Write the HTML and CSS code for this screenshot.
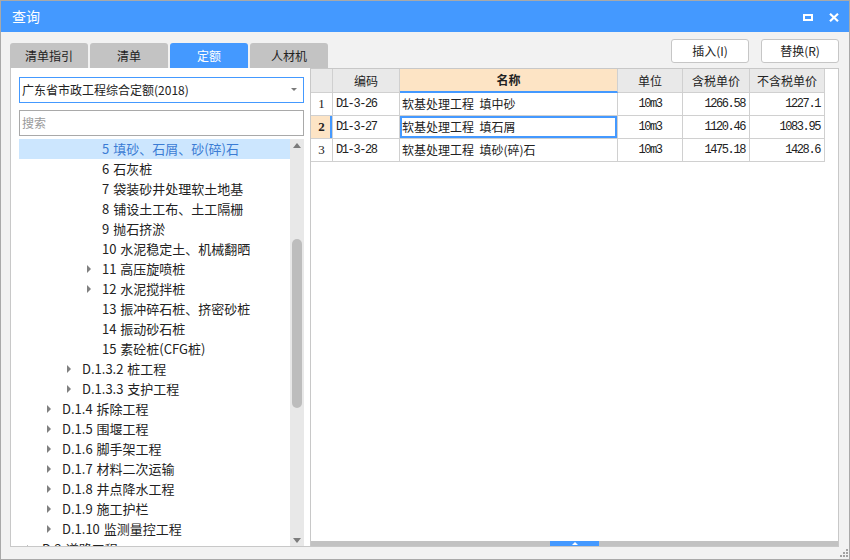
FILE: index.html
```html
<!DOCTYPE html>
<html lang="zh-CN">
<head>
<meta charset="utf-8">
<title>查询</title>
<link rel="stylesheet" href="styles.css">
</head>
<body>
<div class="window">
  <div class="titlebar">
    <span class="title">查询</span>
    <div class="win-controls">
      <span class="max-icon"></span>
      <svg class="close-icon" width="10" height="9" viewBox="0 0 10 9"><path d="M1 0.8 L9 8.2 M9 0.8 L1 8.2" stroke="#fff" stroke-width="2.2" fill="none"/></svg>
    </div>
  </div>
  <div class="toolbar">
    <div class="tabs">
      <div class="tab">清单指引</div>
      <div class="tab">清单</div>
      <div class="tab active">定额</div>
      <div class="tab">人材机</div>
    </div>
    <div class="actions">
      <button class="btn">插入(I)</button>
      <button class="btn">替换(R)</button>
    </div>
  </div>
  <div class="main">
    <div class="left">
      <div class="select"><span class="select-text">广东省市政工程综合定额(2018)</span><span class="caret"></span></div>
      <div class="search">搜索</div>
      <div class="tree-wrap">
        <div class="tree">
          <div class="row l4 selected"><span class="arr"></span><span class="txt">5 填砂、石屑、砂(碎)石</span></div>
          <div class="row l4"><span class="arr none"></span><span class="txt">6 石灰桩</span></div>
          <div class="row l4"><span class="arr none"></span><span class="txt">7 袋装砂井处理软土地基</span></div>
          <div class="row l4"><span class="arr none"></span><span class="txt">8 铺设土工布、土工隔栅</span></div>
          <div class="row l4"><span class="arr none"></span><span class="txt">9 抛石挤淤</span></div>
          <div class="row l4"><span class="arr none"></span><span class="txt">10 水泥稳定土、机械翻晒</span></div>
          <div class="row l4"><span class="arr"></span><span class="txt">11 高压旋喷桩</span></div>
          <div class="row l4"><span class="arr"></span><span class="txt">12 水泥搅拌桩</span></div>
          <div class="row l4"><span class="arr none"></span><span class="txt">13 振冲碎石桩、挤密砂桩</span></div>
          <div class="row l4"><span class="arr none"></span><span class="txt">14 振动砂石桩</span></div>
          <div class="row l4"><span class="arr none"></span><span class="txt">15 素砼桩(CFG桩)</span></div>
          <div class="row l3"><span class="arr"></span><span class="txt">D.1.3.2 桩工程</span></div>
          <div class="row l3"><span class="arr"></span><span class="txt">D.1.3.3 支护工程</span></div>
          <div class="row l2"><span class="arr"></span><span class="txt">D.1.4 拆除工程</span></div>
          <div class="row l2"><span class="arr"></span><span class="txt">D.1.5 围堰工程</span></div>
          <div class="row l2"><span class="arr"></span><span class="txt">D.1.6 脚手架工程</span></div>
          <div class="row l2"><span class="arr"></span><span class="txt">D.1.7 材料二次运输</span></div>
          <div class="row l2"><span class="arr"></span><span class="txt">D.1.8 井点降水工程</span></div>
          <div class="row l2"><span class="arr"></span><span class="txt">D.1.9 施工护栏</span></div>
          <div class="row l2"><span class="arr"></span><span class="txt">D.1.10 监测量控工程</span></div>
          <div class="row l1"><span class="arr"></span><span class="txt">D.2 道路工程</span></div>
        </div>
        <div class="vscroll">
          <div class="sb-btn"><span class="tri-up"></span></div>
          <div class="thumb"></div>
          <div class="sb-fill"></div>
          <div class="sb-btn"><span class="tri-down"></span></div>
        </div>
      </div>
    </div>
    <div class="right">
      <div class="grid">
        <div class="gr head">
          <div class="c cn"></div>
          <div class="c">编码</div>
          <div class="c hl">名称</div>
          <div class="c">单位</div>
          <div class="c">含税单价</div>
          <div class="c">不含税单价</div>
        </div>
        <div class="gr">
          <div class="c cn">1</div>
          <div class="c code">D1-3-26</div>
          <div class="c name">软基处理工程  填中砂</div>
          <div class="c unit">10m3</div>
          <div class="c num">1266.58</div>
          <div class="c num">1227.1</div>
        </div>
        <div class="gr cur">
          <div class="c cn">2</div>
          <div class="c code">D1-3-27</div>
          <div class="c name focus">软基处理工程  填石屑</div>
          <div class="c unit">10m3</div>
          <div class="c num">1120.46</div>
          <div class="c num">1083.95</div>
        </div>
        <div class="gr">
          <div class="c cn">3</div>
          <div class="c code">D1-3-28</div>
          <div class="c name">软基处理工程  填砂(碎)石</div>
          <div class="c unit">10m3</div>
          <div class="c num">1475.18</div>
          <div class="c num">1428.6</div>
        </div>
      </div>
      <div class="spacer"></div>
      <div class="hscroll"><span class="handle"><span class="tri-small"></span></span></div>
    </div>
  </div>
  <div class="statusbar">
    <svg class="grip" width="10" height="9" viewBox="0 0 10 9">
      <rect x="7" y="0" width="2" height="2" fill="#a3a3a3"/>
      <rect x="4" y="3" width="2" height="2" fill="#a3a3a3"/>
      <rect x="7" y="3" width="2" height="2" fill="#a3a3a3"/>
      <rect x="1" y="6" width="2" height="2" fill="#a3a3a3"/>
      <rect x="4" y="6" width="2" height="2" fill="#a3a3a3"/>
      <rect x="7" y="6" width="2" height="2" fill="#a3a3a3"/>
    </svg>
  </div>
</div>
</body>
</html>
```
FILE: styles.css
```css
* { box-sizing: border-box; margin: 0; padding: 0; }
body { margin: 0; background: #ffffff; font-family: "Noto Sans CJK SC", "Noto Sans", sans-serif; color: #222; }

.window {
  width: 850px; height: 560px;
  border: 1px solid #a9a9a9;
  background: #f2f2f2;
  display: flex; flex-direction: column;
  overflow: hidden;
}

.titlebar {
  height: 31px; flex: none;
  background: #4499ff;
  display: flex; align-items: center;
  padding: 0 10px 0 11px;
  color: #fff;
}
.title { flex: 1; font-size: 14px; line-height: 31px; }
.win-controls { display: flex; align-items: center; gap: 16px; padding-top: 1px; }
.max-icon { width: 10px; height: 7px; border: 2px solid #fff; display: block; }
.close-icon { display: block; }

.toolbar {
  height: 36px; flex: none;
  display: flex; justify-content: space-between;
  padding: 0 10px 0 9px;
}
.tabs { display: flex; gap: 2px; align-self: flex-end; }
.tab {
  width: 78px; height: 25px;
  background: #c3c3c3;
  border-radius: 3px 3px 0 0;
  font-size: 12px; line-height: 25px; text-align: center;
  color: #222;
}
.tab.active { background: #4499ff; color: #fff; }

.actions { display: flex; gap: 12px; padding-top: 7px; }
.btn {
  width: 78px; height: 24px;
  background: #fff;
  border: 1px solid #c6c6c6; border-radius: 3px;
  font-family: "Noto Sans CJK SC", "Noto Sans", sans-serif;
  font-size: 12px; color: #222; line-height: 22px;
}

.main {
  height: 479px; flex: none;
  display: flex;
  padding: 0 10px 0 9px;
}

.left {
  width: 300px; flex: none;
  background: #fff;
  border-left: 1px solid #c8c8c8;
  border-bottom: 1px solid #c8c8c8;
  padding: 9px 6px 0 8px;
  display: flex; flex-direction: column;
}
.select {
  height: 26px; flex: none;
  border: 1px solid #4499ff;
  display: flex; align-items: center; justify-content: space-between;
  padding: 0 6px 0 2px;
}
.select-text { font-size: 12px; line-height: 24px; color: #222; }
.caret {
  width: 0; height: 0;
  border-left: 3px solid transparent; border-right: 3px solid transparent;
  border-top: 3px solid #7a7a7a;
  margin-top: -2px;
}
.search {
  height: 26px; flex: none; margin-top: 7px;
  border: 1px solid #a9a9a9;
  font-size: 12px; line-height: 24px; color: #9a9a9a;
  padding-left: 2px;
}

.tree-wrap { flex: 1; min-height: 0; margin-top: 3px; display: flex; overflow: hidden; }
.tree { flex: 1; min-width: 0; overflow: hidden; }
.row {
  height: 20px; display: flex; align-items: center;
  font-size: 13px; line-height: 20px; color: #222; white-space: nowrap;
}
.row.selected { background: #cce6fe; color: #3b7cd4; }
.row.l1 { padding-left: 8px; }
.row.l2 { padding-left: 28px; }
.row.l3 { padding-left: 48px; }
.row.l4 { padding-left: 68px; }
.arr {
  width: 15px; height: 8px; flex: none; position: relative;
}
.arr::before {
  content: ""; position: absolute; left: 0; top: 0;
  border-left: 4px solid #808080;
  border-top: 4px solid transparent; border-bottom: 4px solid transparent;
}
.row.selected .arr::before, .arr.none::before { display: none; }
.txt { display: block; word-spacing: 1px; }

.vscroll {
  width: 14px; flex: none;
  background: #e8e8e8;
  display: flex; flex-direction: column; align-items: center;
}
.sb-btn { height: 12px; width: 14px; flex: none; display: flex; align-items: center; justify-content: center; }
.tri-up { width: 0; height: 0; border-left: 4.5px solid transparent; border-right: 4.5px solid transparent; border-bottom: 5px solid #7c7c7c; }
.tri-down { width: 0; height: 0; border-left: 4.5px solid transparent; border-right: 4.5px solid transparent; border-top: 5px solid #7c7c7c; }
.thumb { width: 10px; height: 169px; flex: none; margin-top: 88px; background: #bdbdbd; border-radius: 5px; }
.sb-fill { flex: 1; }

.right {
  width: 529px; flex: none;
  background: #fff;
  border: 1px solid #c8c8c8;
  display: flex; flex-direction: column;
}
.grid { display: flex; flex-direction: column; }
.gr { display: grid; grid-template-columns: 22px 67px 218px 65px 67px 75px; height: 23px; }
.gr.head { height: 24px; }
.c {
  border-right: 1px solid #d0d0d0;
  border-bottom: 1px solid #d0d0d0;
  font-size: 12px; line-height: 22px;
  white-space: pre; overflow: hidden;
}
.head .c { background: #e9e9e9; text-align: center; line-height: 23px; color: #222; }
.head .c.hl { background: #fde4c5; font-weight: bold; border-bottom: 2px solid #4499ff; line-height: 22px; }
.c.cn { text-align: center; font-family: "Liberation Serif", serif; font-size: 13px; }
.cur .c.cn { background: #fde4c5; font-weight: bold; box-shadow: inset -2px 0 0 #4499ff; }
.c.code { font-family: "Liberation Mono", monospace; font-size: 12px; letter-spacing: -1.4px; padding-left: 3px; }
.c.name { padding-left: 2px; font-size: 12px; }
.c.name.focus { box-shadow: inset 0 0 0 2px #4499ff; }
.c.unit { text-align: center; font-family: "Liberation Mono", monospace; font-size: 12px; letter-spacing: -1.4px; }
.c.num { text-align: right; font-family: "Liberation Mono", monospace; font-size: 12px; letter-spacing: -1.4px; padding-right: 4px; }

.spacer { flex: 1; }
.hscroll { height: 5px; flex: none; background: #c2c2c2; display: flex; justify-content: flex-start; padding-left: 239px; }
.handle { width: 49px; height: 5px; background: #4499ff; display: flex; justify-content: center; align-items: center; }
.tri-small { width: 0; height: 0; border-left: 3px solid transparent; border-right: 3px solid transparent; border-bottom: 3px solid #fff; }

.statusbar { flex: 1; display: flex; justify-content: flex-end; align-items: flex-end; padding: 0 0 1px 0; }
.grip { display: block; }
```
